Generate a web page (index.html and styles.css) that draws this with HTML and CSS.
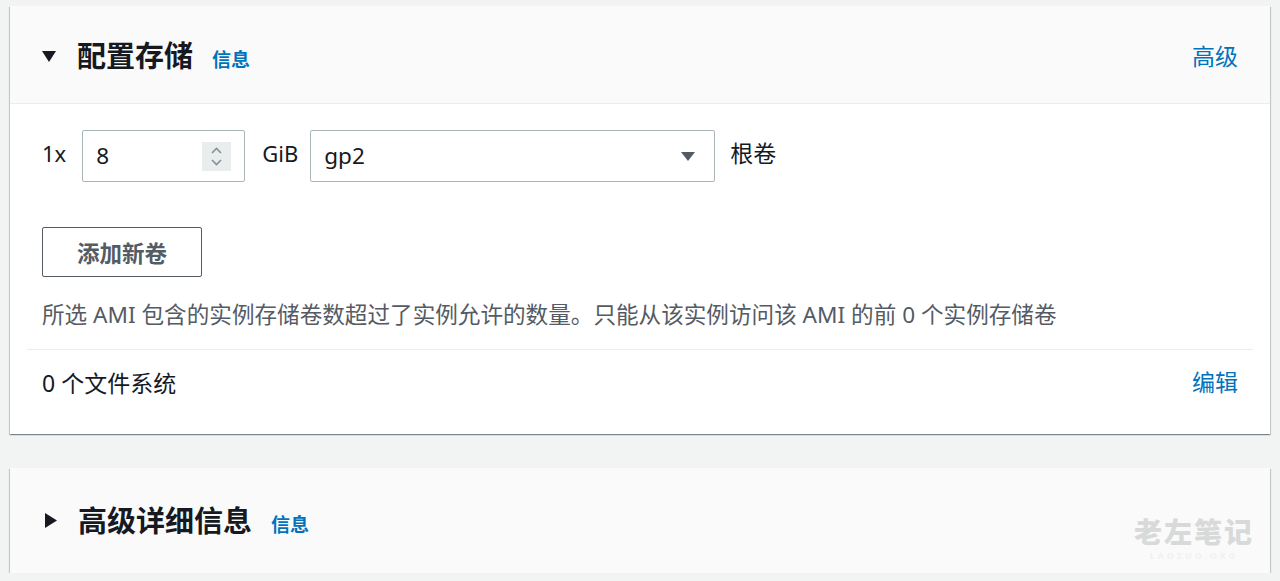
FILE: index.html
```html
<!DOCTYPE html>
<html lang="zh-CN">
<head>
<meta charset="utf-8">
<title>配置存储</title>
<link rel="stylesheet" href="styles.css">
</head>
<body>
<div class="page">
  <section class="card">
    <div class="card-header">
      <div class="title-group">
        <svg class="caret-down" width="14" height="13" viewBox="0 0 14 13"><polygon points="0,1 14,1 7,12" fill="#16191f"/></svg>
        <h2 class="title">配置存储</h2>
        <a class="info">信息</a>
      </div>
      <a class="link-lg">高级</a>
    </div>
    <div class="card-body">
      <div class="vol-row">
        <span class="lbl">1x</span>
        <div class="num-input">
          <span class="val">8</span>
          <span class="spinner">
            <svg width="29" height="29" viewBox="0 0 29 29"><path d="M10 11 L14.5 6.5 L19 11" fill="none" stroke="#879196" stroke-width="1.6"/><path d="M10 18 L14.5 22.5 L19 18" fill="none" stroke="#879196" stroke-width="1.6"/></svg>
          </span>
        </div>
        <span class="lbl gib">GiB</span>
        <div class="select">
          <span class="val">gp2</span>
          <svg class="sel-caret" width="14" height="10" viewBox="0 0 14 10"><polygon points="0,0 14,0 7,9" fill="#545b64"/></svg>
        </div>
        <span class="lbl root">根卷</span>
      </div>
      <button class="btn">添加新卷</button>
      <p class="desc">所选 AMI 包含的实例存储卷数超过了实例允许的数量。只能从该实例访问该 AMI 的前 0 个实例存储卷</p>
      <div class="divider"></div>
      <div class="fs-row">
        <span>0 个文件系统</span>
        <a class="link-lg">编辑</a>
      </div>
    </div>
  </section>
  <section class="card collapsed">
    <div class="card-header">
      <div class="title-group">
        <svg class="caret-right" width="13" height="15" viewBox="0 0 13 15"><polygon points="1,0 13,7.5 1,15" fill="#16191f"/></svg>
        <h2 class="title">高级详细信息</h2>
        <a class="info">信息</a>
      </div>
    </div>
    <div class="watermark">
      <span class="wm-cn">老左笔记</span>
      <span class="wm-en">LAOZUO.ORG</span>
    </div>
  </section>
</div>
</body>
</html>
```
FILE: styles.css
```css
* { box-sizing: border-box; }
html, body {
  margin: 0;
  padding: 0;
  background: #f2f3f3;
  font-family: "Noto Sans", "Noto Sans CJK SC", sans-serif;
  color: #16191f;
}
.page {
  padding: 6px 10px 0 10px;
  display: flex;
  flex-direction: column;
  gap: 34px;
}
.card {
  background: #fff;
  box-shadow: 0 1px 1px 0 rgba(0,28,36,.3), 1px 1px 1px 0 rgba(0,28,36,.15), -1px 1px 1px 0 rgba(0,28,36,.15);
  position: relative;
}
.card-header {
  height: 98px;
  background: #fafafa;
  border-bottom: 1px solid #eaeded;
  display: flex;
  align-items: center;
  justify-content: space-between;
  padding: 3px 32px 0 32px;
}
.collapsed .card-header {
  height: 105px;
  padding-top: 0;
  border-bottom: none;
}
.title-group {
  display: flex;
  align-items: center;
}
.caret-down { margin-right: 21px; }
.caret-right { margin-left: 2px; margin-right: 21px; }
.title {
  margin: 0;
  font-size: 29px;
  font-weight: 700;
  line-height: 40px;
}
.info {
  margin-left: 19px;
  margin-top: 6px;
  font-size: 19px;
  font-weight: 700;
  color: #0073bb;
}
.link-lg {
  font-size: 23px;
  color: #0073bb;
  line-height: 32px;
}
.card-body {
  padding: 26px 32px 0 32px;
}
.vol-row {
  display: flex;
  align-items: center;
  height: 52px;
}
.lbl {
  font-size: 22px;
  line-height: 32px;
  margin-top: -6px;
}
.num-input {
  margin-left: 16px;
  width: 163px;
  height: 52px;
  border: 1px solid #aab7b8;
  border-radius: 2px;
  display: flex;
  align-items: center;
  justify-content: space-between;
  padding: 0 13px 0 13px;
}
.val {
  font-size: 22.5px;
  line-height: 32px;
}
.spinner {
  width: 29px;
  height: 29px;
  background: #eaeded;
  display: flex;
}
.gib { margin-left: 17px; }
.select {
  margin-left: 12px;
  width: 405px;
  height: 52px;
  border: 1px solid #aab7b8;
  border-radius: 2px;
  display: flex;
  align-items: center;
  justify-content: space-between;
  padding: 0 19px 0 13px;
}
.sel-caret { margin-top: 2px; }
.root { margin-left: 15px; font-size: 23px; }
.btn {
  display: block;
  margin-top: 45px;
  width: 160px;
  height: 50px;
  background: #fff;
  border: 1px solid #545b64;
  border-radius: 2px;
  font-family: inherit;
  font-size: 22.5px;
  font-weight: 700;
  color: #545b64;
  padding: 0;
}
.desc {
  margin: 22px 0 0 0;
  font-size: 22.6px;
  line-height: 32px;
  color: #545b64;
  white-space: nowrap;
}
.divider {
  margin: 18px -15px 0 -15px;
  height: 1px;
  background: #eaeded;
}
.fs-row {
  display: flex;
  justify-content: space-between;
  align-items: center;
  height: 66px;
  padding-bottom: 2px;
  font-size: 23px;
  margin-bottom: 18px;
}
.watermark {
  position: absolute;
  right: 16px;
  top: 50px;
  display: flex;
  flex-direction: column;
  align-items: center;
  gap: 5px;
  pointer-events: none;
}
.wm-cn {
  font-size: 28px;
  font-weight: 900;
  color: #d8d9d9;
  letter-spacing: 2px;
  line-height: 28px;
}
.wm-en {
  font-size: 9px;
  font-weight: 700;
  color: #f1f1f1;
  letter-spacing: 3px;
  line-height: 10px;
}
```
